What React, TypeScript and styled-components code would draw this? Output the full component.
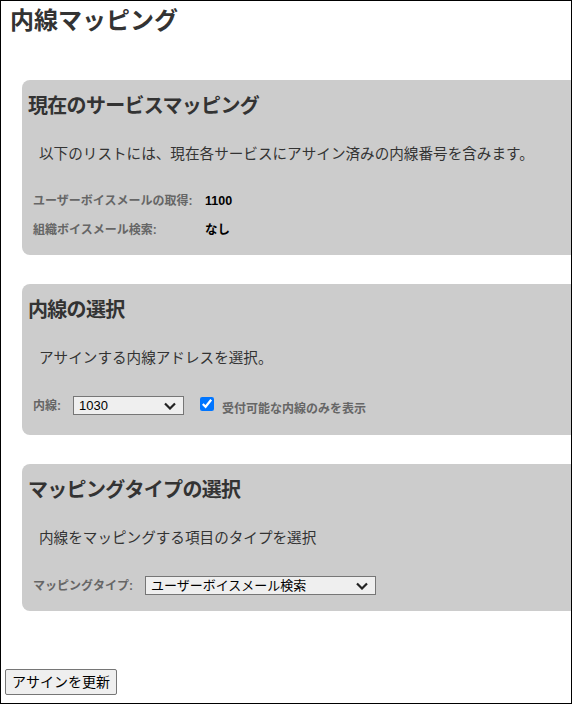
import React from "react";
import styled, { createGlobalStyle } from "styled-components";

const Global = createGlobalStyle`
  html, body { margin: 0; padding: 0; background: #fff; }
  body { font-family: "Liberation Sans", "Noto Sans CJK JP", sans-serif; }
`;

const Frame = styled.div`
  width: 572px;
  height: 704px;
  box-sizing: border-box;
  border: 1px solid #000;
  overflow: hidden;
  display: flex;
  flex-direction: column;
`;

const PageTitle = styled.h1`
  margin: 5px 0 0 9px;
  font-size: 24px;
  line-height: 30px;
  font-weight: bold;
  color: #333;
`;

const Sections = styled.div`
  display: flex;
  flex-direction: column;
  gap: 29px;
  margin-top: 44px;
`;

const Panel = styled.section`
  margin-left: 21px;
  margin-right: -30px;
  background: #cccccc;
  border-radius: 8px;
  padding: 12px 0 15px 6px;
`;

const PanelTitle = styled.h2`
  margin: 0;
  font-size: 20px;
  line-height: 28px;
  font-weight: bold;
  color: #333;
  letter-spacing: -0.7px;
`;

const Description = styled.p`
  margin: 24px 0 0 11px;
  font-size: 14.6px;
  line-height: 20px;
  color: #333;
`;

const InfoGrid = styled.dl`
  margin: 27px 0 0 5px;
  display: grid;
  grid-template-columns: 172px auto;
  row-gap: 9px;
  font-size: 12px;
  line-height: 20px;
`;

const InfoLabel = styled.dt`
  color: #666;
  font-weight: bold;
`;

const InfoValue = styled.dd`
  margin: 0;
  color: #000;
  font-weight: bold;
  font-size: 12.5px;
`;

const ControlRow = styled.div`
  margin: 28px 0 0 5px;
  display: flex;
  align-items: flex-start;
  font-size: 12px;
  line-height: 20px;
`;

const FieldLabel = styled.label`
  color: #666;
  font-weight: bold;
  margin-right: 12px;
`;

const SelectWrap = styled.div<{ $width: number }>`
  position: relative;
  width: ${(p) => p.$width}px;
  height: 19px;
`;

const Select = styled.select`
  appearance: none;
  width: 100%;
  height: 100%;
  box-sizing: border-box;
  border: 1px solid #767676;
  border-radius: 0;
  background: #efefef;
  font: 13px "Liberation Sans", "Noto Sans CJK JP", sans-serif;
  color: #000;
  padding: 0 24px 0 5px;
  margin: 0;
  outline: none;
`;

const Chevron = styled.svg`
  position: absolute;
  right: 8px;
  top: 6px;
  width: 12px;
  height: 8px;
  pointer-events: none;
`;

const Checkbox = styled.input`
  width: 14px;
  height: 14px;
  margin: 1px 8px 0 16px;
  accent-color: #0075ff;
`;

const CheckLabel = styled.label`
  color: #666;
  font-weight: bold;
  padding: 3px 0 1px;
`;

const UpdateButton = styled.button`
  align-self: flex-start;
  margin: auto 0 8px 4px;
  font: 14px "Liberation Sans", "Noto Sans CJK JP", sans-serif;
  color: #000;
  background: #efefef;
  border: 1px solid #767676;
  border-radius: 2px;
  padding: 0 6px;
  height: 26px;
  line-height: 22px;
`;

function DropDown({ width, value, options }: { width: number; value: string; options: string[] }) {
  return (
    <SelectWrap $width={width}>
      <Select defaultValue={value}>
        {options.map((o) => (
          <option key={o}>{o}</option>
        ))}
      </Select>
      <Chevron viewBox="0 0 12 8">
        <path d="M1 1.5 L6 6.5 L11 1.5" fill="none" stroke="#222" strokeWidth="2.2" />
      </Chevron>
    </SelectWrap>
  );
}

export default function App() {
  return (
    <>
      <Global />
      <Frame>
        <PageTitle>内線マッピング</PageTitle>
        <Sections>
          <Panel>
            <PanelTitle>現在のサービスマッピング</PanelTitle>
            <Description>以下のリストには、現在各サービスにアサイン済みの内線番号を含みます。</Description>
            <InfoGrid>
              <InfoLabel>ユーザーボイスメールの取得:</InfoLabel>
              <InfoValue>1100</InfoValue>
              <InfoLabel>組織ボイスメール検索:</InfoLabel>
              <InfoValue>なし</InfoValue>
            </InfoGrid>
          </Panel>
          <Panel>
            <PanelTitle>内線の選択</PanelTitle>
            <Description>アサインする内線アドレスを選択。</Description>
            <ControlRow>
              <FieldLabel>内線:</FieldLabel>
              <DropDown width={111} value="1030" options={["1030", "1031", "1032"]} />
              <Checkbox type="checkbox" defaultChecked />
              <CheckLabel>受付可能な内線のみを表示</CheckLabel>
            </ControlRow>
          </Panel>
          <Panel>
            <PanelTitle>マッピングタイプの選択</PanelTitle>
            <Description>内線をマッピングする項目のタイプを選択</Description>
            <ControlRow>
              <FieldLabel>マッピングタイプ:</FieldLabel>
              <DropDown
                width={231}
                value="ユーザーボイスメール検索"
                options={["ユーザーボイスメールの取得", "ユーザーボイスメール検索", "組織ボイスメール検索"]}
              />
            </ControlRow>
          </Panel>
        </Sections>
        <UpdateButton>アサインを更新</UpdateButton>
      </Frame>
    </>
  );
}
